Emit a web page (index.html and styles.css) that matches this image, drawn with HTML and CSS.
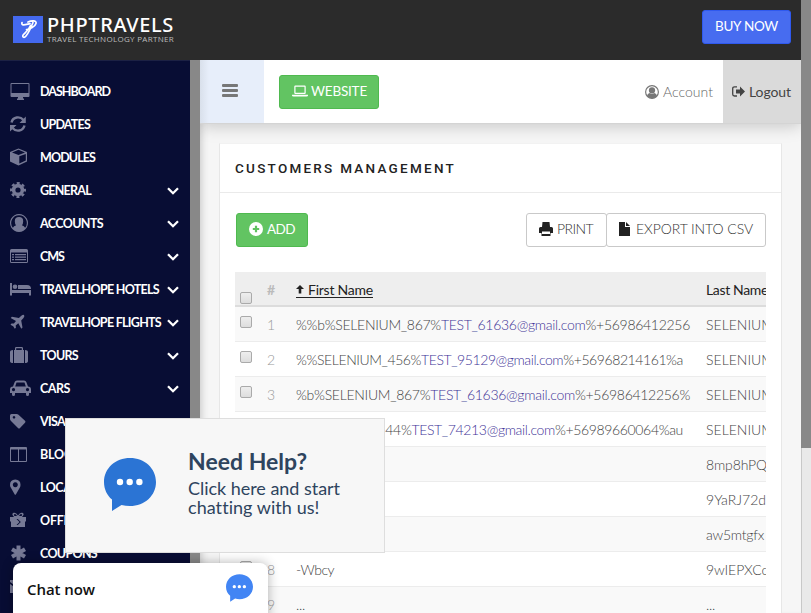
FILE: index.html
```html
<!DOCTYPE html>
<html lang="en">
<head>
<meta charset="utf-8">
<title>Customers Management</title>
<link rel="stylesheet" href="styles.css">
</head>
<body>
<svg class="defs" width="0" height="0">
  <symbol id="bubble" viewBox="0 0 52 53"><path d="M26 0C40.500 0 52 10.300 52 24S40.500 48 26 48q-4.500 0-8.500-1.100L8 53V41.500C3 37.500 0 31 0 24 0 10.300 11.500 0 26 0z"/><g fill="#fff"><circle cx="16" cy="24" r="3.200"/><circle cx="25.700" cy="24" r="3.200"/><circle cx="35.400" cy="24" r="3.200"/></g></symbol>
  <symbol id="chevron" viewBox="0 0 12 8"><path d="M1 1.300 6 6.200 11 1.300" fill="none" stroke="#fff" stroke-width="2.300"/></symbol>
</svg>
<div class="app">
  <div class="page">
    <header class="top">
      <div class="brand">
        <svg class="mark" width="30" height="27" viewBox="0 0 30 27"><path fill="#4469ee" d="M0 0h30v27H0z"/><path fill="none" stroke="#fff" stroke-width="1.700" stroke-linecap="round" stroke-linejoin="round" d="M9 6.500c-1 4 4 2 8 1.200M15 6c4-2 9-1.500 8 1.500-1 3.500-7 6-9.500 6M20 6.500c-2 5-4 10-7 13.500-2 2.500-4.500 1-2.500-1.500 2-2.200 5.500-4.500 7-9"/></svg>
        <div class="brand-text"><div class="name"><span style="width:127px">PHPTRAVELS</span></div><div class="tag"><span style="width:127px">TRAVEL TECHNOLOGY PARTNER</span></div></div>
      </div>
      <a class="buy"><span style="width:63px">BUY NOW</span></a>
    </header>
    <div class="body">
      <nav class="side">
        <ul>
          <li><svg viewBox="0 0 21 20"><path fill-rule="evenodd" d="M1.500 2h17q1 0 1 1v12q0 1-1 1H13v1.500h1V19H7v-1.500h1V16H1.500q-1 0-1-1V3q0-1 1-1zm0 1v9h17V3z"/></svg><span style="width:70px">DASHBOARD</span></li>
          <li><svg viewBox="0 0 21 20"><path fill="none" stroke="currentColor" stroke-width="2.400" d="M1.500 8.500C3 2.500 10 2 13.500 6M14.500 11.500C13 17.500 6 18 2.500 14"/><path d="M15.800 2.500v6.500H9.500zM0 17.500V11h6.500z"/></svg><span style="width:50px">UPDATES</span></li>
          <li><svg viewBox="0 0 21 20"><path fill-rule="evenodd" d="M8.500 1.500 17 5v9.500l-8.500 4L0 14.500V5zm0 1.300L2 5.500l6.500 2.400L15 5.500zm.8 6.500v7.200l6.500-3V7z"/></svg><span style="width:55px">MODULES</span></li>
          <li><svg viewBox="0 0 21 20"><circle cx="8" cy="10" r="4.400" fill="none" stroke="currentColor" stroke-width="3.600"/><circle cx="8" cy="10" r="6.900" fill="none" stroke="currentColor" stroke-width="2.200" stroke-dasharray="3 2.420" stroke-dashoffset="1.500"/></svg><span style="width:51px">GENERAL</span><svg class="chev"><use href="#chevron"/></svg></li>
          <li><svg viewBox="0 0 21 20"><path fill-rule="evenodd" d="M9 1a9 9 0 1 0 .01 0zm0 1.200a7.800 7.800 0 0 1 6.100 12.600q-.8-1.800-3.200-2.600 1.300-1.500 1.300-4Q13.200 4 9 4T4.800 8.200q0 2.500 1.300 4-2.400.8-3.200 2.600A7.800 7.800 0 0 1 9 2.200z"/></svg><span style="width:63px">ACCOUNTS</span><svg class="chev"><use href="#chevron"/></svg></li>
          <li><svg viewBox="0 0 21 20"><path fill-rule="evenodd" d="M1.500 3h15q1.500 0 1.500 1.500v11q0 1.500-1.500 1.500h-15Q0 17 0 15.500v-11Q0 3 1.500 3zM1 6.500V16h16V6.500z"/><path d="M2 8h2v1.300H2zm3 0h11v1.300H5zM2 10.500h2v1.300H2zm3 0h11v1.300H5zM2 13h2v1.300H2zm3 0h11v1.300H5z"/></svg><span style="width:24px">CMS</span><svg class="chev"><use href="#chevron"/></svg></li>
          <li><svg viewBox="0 0 21 20"><path d="M0 4h2v7h19v5.500h-2V14H2v2.500H0z"/><circle cx="5" cy="7.800" r="2.300"/><path d="M8 6h9q4 0 4 4H8z"/></svg><span style="width:119px">TRAVELHOPE HOTELS</span><svg class="chev"><use href="#chevron"/></svg></li>
          <li><svg viewBox="0 0 21 20"><path d="M14 3q1 1-.500 3l-2.300 2.500 1.300 7-1.200 1.200-3-5.500-2.600 2.300.2 2.300-1.100 1-1.600-2.600L.5 12.700l1-1.200 2.400.1L6 9 .7 6l1.200-1.200 7 1.200 2.400-2.300Q13 2.500 14 3z"/></svg><span style="width:121px">TRAVELHOPE FLIGHTS</span><svg class="chev"><use href="#chevron"/></svg></li>
          <li><svg viewBox="0 0 21 20"><path fill-rule="evenodd" d="M5 5V3.200Q5 2 6.200 2h5.600Q13 2 13 3.200V5h1v13H4V5zm1.200-1.700V5h5.600V3.300zM0 7q0-2 3-2v13q-3 0-3-2zm15-2q3 0 3 2v9q0 2-3 2z"/></svg><span style="width:38px">TOURS</span><svg class="chev"><use href="#chevron"/></svg></li>
          <li><svg viewBox="0 0 21 20"><path fill-rule="evenodd" d="M3 8.500 4.700 4Q5.200 2.500 7 2.500h7q1.800 0 2.300 1.500L18 8.500q3 .2 3 3V15h-2v1.500q0 1.500-1.500 1.500T16 16.500V15H5v1.500Q5 18 3.500 18T2 16.500V15H0v-3.500q0-2.800 3-3zm2.200 0h10.600l-1.300-4h-8zM3.500 10a1.600 1.600 0 1 0 .01 0zm14 0a1.600 1.600 0 1 0 .01 0z"/></svg><span style="width:30px">CARS</span><svg class="chev"><use href="#chevron"/></svg></li>
          <li><svg viewBox="0 0 21 20"><path fill-rule="evenodd" d="M1.500 3h5q1.200 0 2 .8l6.500 6q1 1 0 2L10 17q-1 1-2 0L1 10q-1-.8-1-2V4.500Q0 3 1.500 3zM4 5a1.300 1.300 0 1 0 .01 0z"/></svg><span style="width:25px">VISA</span></li>
          <li><svg viewBox="0 0 21 20"><path fill-rule="evenodd" d="M1 3h15q1 0 1 1v13q0 1-1 1H1q-1 0-1-1V4q0-1 1-1zm0 2.500V17h7V5.500zm8 0V17h7V5.500z"/></svg><span style="width:33px">BLOG</span></li>
          <li><svg viewBox="0 0 21 20"><path fill-rule="evenodd" d="M5.300 2.500q5.200.3 5.200 5.300 0 1.500-.5 2.500l-4 7q-.7 1-1.400 0l-4-7Q0 9.300 0 7.800 0 2.800 5.300 2.500zm0 2.800a2.500 2.500 0 1 0 .01 0z"/></svg><span style="width:66px">LOCATIONS</span></li>
          <li><svg viewBox="0 0 21 20"><path fill-rule="evenodd" d="M0 7h4Q1 4 3.500 2.800 6 2 8 5.500 10 2 12.500 2.800 15 4 12 7h4v4.500h-1V17H1v-5.500H0zm5-3q-2 .3-.5 2H7Q6 4 5 4zm6 0q-1 0-2 2h2.500q1.500-1.700-.5-2zM6.500 9l3 3-3 3h1.300l3-3-3-3z"/></svg><span style="width:45px">OFFERS</span></li>
          <li><svg viewBox="0 0 21 20"><path fill="none" stroke="currentColor" stroke-width="4" d="M8.500 2.500v15M2 6.200l13 7.600M15 6.200 2 13.800"/></svg><span style="width:57px">COUPONS</span></li>
          <li><svg viewBox="0 0 21 20"><path d="M0 4h17v2l-8.500 6L0 6zm0 4 8.500 6L17 8v9H0z"/></svg></li>
        </ul>
      </nav>
      <div class="side-scroll"></div>
      <main>
        <div class="bar">
          <a class="burger"><i></i><i></i><i></i></a>
          <a class="btn green site"><svg width="16" height="12" viewBox="0 0 16 12"><path fill="#fff" fill-rule="evenodd" d="M3.300.5h9.400q1 0 1 1V8q0 1-1 1H3.300q-1 0-1-1V1.500q0-1 1-1zM3.500 1.800v6h9v-6zM0 9.800h16v.8q0 .9-1.500.9h-13Q0 11.500 0 10.600z"/></svg><span style="width:56px">WEBSITE</span></a>
          <div class="account"><svg width="14" height="14" viewBox="0 0 18 18"><circle cx="9" cy="9" r="8.200" fill="none" stroke="#777" stroke-width="1.500"/><circle cx="9" cy="7" r="4" fill="#777"/><path fill="#777" d="M2.500 14.500q.5-3.500 3.500-4.200 3 2.500 6 0 3 .7 3.500 4.200-6 5.500-13 0z"/></svg><span style="width:50px">Account</span></div>
          <div class="logout"><svg width="13" height="11" viewBox="0 0 13 11"><path d="M5 .8H2.500q-1.800 0-1.800 1.700v5.800q0 1.700 1.800 1.700H5" fill="none" stroke="#444" stroke-width="1.300"/><path fill="#444" d="M4 3.500h4V.5l5 5-5 5v-3H4z"/></svg><span style="width:42px">Logout</span></div>
        </div>
        <section class="card">
          <h1><span style="width:221px">CUSTOMERS MANAGEMENT</span></h1>
          <div class="tools">
            <a class="btn green add"><svg width="14" height="14" viewBox="0 0 14 14"><circle cx="7" cy="7" r="7" fill="#fff"/><path d="M7 3.800v6.400M3.800 7h6.400" stroke="#5fc25f" stroke-width="2.200"/></svg><span style="width:28px">ADD</span></a>
            <div class="exports">
              <a class="btn plain print"><svg width="14" height="14" viewBox="0 0 14 14"><path fill="#222" fill-rule="evenodd" d="M3.500 0h7l.5 5h1.500Q14 5 14 6.500V11h-2.500v3h-9v-3H0V6.500Q0 5 1.500 5H3zM3 9.500V12h8V9.500z"/></svg><span style="width:36px">PRINT</span></a>
              <a class="btn plain csv"><svg width="11" height="14" viewBox="0 0 11 14"><path fill="#222" d="M0 0h6v5h5v9H0zM7 0l4 4H7z"/></svg><span style="width:117px">EXPORT INTO CSV</span></a>
            </div>
          </div>
          <div class="table">
            <div class="row head"><i class="cb"></i><b class="num">#</b><div class="first"><div class="sort"><svg width="8" height="9" viewBox="0 0 8 9"><path fill="#222" d="M4 0 8 4H5.300v4.500H2.700V4H0z"/></svg><span style="width:65px">First Name</span></div></div><div class="last"><span style="width:62px">Last Name</span></div></div>
            <div class="row"><i class="cb"></i><b class="num">1</b><div class="first"><span style="width:394px">%%b%SELENIUM_867%<a>TEST_61636@gmail.com</a>%+56986412256</span></div><div class="last"><span style="width:68px">SELENIUM</span></div></div>
            <div class="row"><i class="cb"></i><b class="num">2</b><div class="first"><span style="width:387px">%%SELENIUM_456%<a>TEST_95129@gmail.com</a>%+56968214161%a</span></div><div class="last"><span style="width:68px">SELENIUM</span></div></div>
            <div class="row"><i class="cb"></i><b class="num">3</b><div class="first"><span style="width:394px">%b%SELENIUM_867%<a>TEST_61636@gmail.com</a>%+56986412256%</span></div><div class="last"><span style="width:68px">SELENIUM</span></div></div>
            <div class="row"><i class="cb"></i><b class="num">4</b><div class="first"><span style="width:387px">%SELENIUM_144%<a>TEST_74213@gmail.com</a>%+56989660064%au</span></div><div class="last"><span style="width:68px">SELENIUM</span></div></div>
            <div class="row"><i class="cb"></i><b class="num"></b><div class="first"></div><div class="last"><span style="width:61px">8mp8hPQ</span></div></div>
            <div class="row"><i class="cb"></i><b class="num"></b><div class="first"></div><div class="last"><span style="width:60px">9YaRJ72d</span></div></div>
            <div class="row"><i class="cb"></i><b class="num"></b><div class="first"></div><div class="last"><span style="width:58px">aw5mtgfx</span></div></div>
            <div class="row"><i class="cb"></i><b class="num">8</b><div class="first"><span style="width:38px">-Wbcy</span></div><div class="last"><span style="width:62px">9wIEPXCc</span></div></div>
            <div class="row"><i class="cb"></i><b class="num">9</b><div class="first"><span style="width:9px">...</span></div><div class="last"><span style="width:9px">...</span></div></div>
          </div>
        </section>
      </main>
    </div>
  </div>
  <div class="scroll"><div class="thumb"></div></div>
  <aside class="help">
    <svg width="52" height="53" fill="#2b74d4"><use href="#bubble"/></svg>
    <div class="help-text"><strong><span style="width:119px">Need Help?</span></strong><p><span style="width:152px">Click here and start</span></p><p><span style="width:131px">chatting with us!</span></p></div>
  </aside>
  <aside class="chat"><span style="width:68px">Chat now</span><svg width="27" height="28" fill="#4285f4"><use href="#bubble"/></svg></aside>
</div>
<script src="fit.js"></script>
</body>
</html>
```
FILE: fit.js
```js
document.querySelectorAll('span[style*="width"]').forEach(function (el) {
  var target = parseFloat(el.style.width);
  el.style.width = 'auto';
  el.style.letterSpacing = '0';
  var natural = el.getBoundingClientRect().width;
  el.style.letterSpacing = ((target - natural) / el.textContent.length).toFixed(3) + 'px';
  el.style.width = target + 'px';
});
```
FILE: styles.css
```css
* { box-sizing: border-box; }
body { margin: 0; font: 300 14px/20px Lato, "Liberation Sans", sans-serif; color: #444; }
.defs { display: none; }
span { display: inline-block; white-space: nowrap; }
.app { position: relative; display: flex; width: 811px; height: 613px; overflow: hidden; }
.page { width: 801px; display: flex; flex-direction: column; }
.scroll { width: 10px; background: #e9e9e9; border-left: 1px solid #c8c8c8; }
.thumb { height: 448px; margin-left: -1px; background: #888; }
.top { height: 60px; flex: none; background: #2b2b2b; display: flex; justify-content: space-between; padding: 10px 10px 0 13px; }
.brand { display: flex; gap: 4px; padding-top: 6px; }
.name { font: 500 20px/17px "Noto Sans", sans-serif; color: #fff; height: 18px; white-space: nowrap; }
.tag { font: 8px/10px "Open Sans", sans-serif; color: #bbb; white-space: nowrap; }
.brand-text { width: 129px; }
.buy { width: 89px; height: 34px; border: 1px solid #2f59ee; border-radius: 3px; background: #476cf0; color: #fff; text-align: center; line-height: 31px; font-weight: 400; font-size: 13.500px; }
.body { display: flex; flex: 1; min-height: 0; }
.side { width: 190px; background: #080d34; border-top: 1px solid #1c2144; overflow: hidden; flex: none; }
.side ul { list-style: none; margin: 0; padding: 13px 11px 0 10px; }
.side li { height: 33px; display: flex; align-items: center; color: #fff; font-size: 12.500px; font-weight: 700; }
.side li > span { margin-top: 2px; }
.side li > svg { width: 21px; height: 20px; margin-right: 9px; fill: currentColor; color: #767995; flex: none; }
.side li > svg.chev { width: 12px; height: 8px; margin: 3px 0 0 auto; }
.side-scroll { width: 10px; background: #888; flex: none; }
main { flex: 1; min-width: 0; background: #f6f6f6; box-shadow: inset 7px 0 7px -5px #ccc; overflow: hidden; }
.bar { height: 64px; background: #fff; display: flex; align-items: center; border-bottom: 1px solid #d4d4d4; box-shadow: 0 2px 16px rgba(0,0,0,.2); }
.burger { width: 64px; height: 63px; background: linear-gradient(90deg, #d9e0eb, #e7eefa 9px); padding: 24px 0 0 22px; }
.burger i { display: block; width: 16px; height: 3px; margin-bottom: 2px; border-radius: 1px; background: #777; }
.btn { display: flex; height: 34px; align-items: center; border: 1px solid; border-radius: 3px; padding-bottom: 2px; }
.green { background: #62c462; border-color: #4fb94f; color: #fff; font-weight: 400; font-size: 13.500px; }
.site { width: 100px; margin-left: 15px; padding-left: 12px; gap: 3px; padding-bottom: 1px; }
.account { margin-left: auto; width: 78px; display: flex; align-items: center; gap: 4px; color: #666; }
.logout { width: 78px; height: 63px; background: #dadada; display: flex; align-items: center; gap: 4px; padding-left: 9px; font-weight: 400; }
.card { width: 563px; height: 500px; margin: 19px 0 0 19px; background: #fff; border: 1px solid #e7e7e7; border-top-color: #f2f2f2; }
h1 { height: 49px; margin: 0; padding: 0 15px; border-bottom: 1px solid #eaeaea; font: 500 13.500px/48px Roboto, sans-serif; color: #222; }
.tools { display: flex; justify-content: space-between; padding: 20px 15px 0 16px; height: 79px; }
.add { width: 72px; padding-left: 12px; gap: 4px; }
.exports { display: flex; }
.plain { border-color: #c9c9c9; color: #333; }
.print { width: 81px; padding-left: 12px; gap: 4px; }
.csv { width: 160px; padding-left: 12px; gap: 6px; margin-left: -1px; }
.table { width: 531px; margin-left: 15px; overflow: hidden; }
.row { display: flex; width: 620px; height: 35px; border-bottom: 1px solid #ececec; padding-left: 5px; line-height: 36px; }
.row:nth-child(even) { background: #f9f9f9; }
.row.head { background: #eee; border-bottom: 2px solid #dcdcdc; color: #222; font-weight: 400; }
.cb { width: 12px; height: 12px; margin-top: 9px; border: 1px solid #aaa; border-radius: 2px; background: linear-gradient(#eee, #ddd); flex: none; }
.head .cb { margin-top: 20px; }
.num { width: 28px; margin-left: 15px; margin-right: 1px; font-weight: 300; color: #999; }
.head .num { font-weight: 700; color: #bbb; }
.first { width: 410px; }
.sort { display: flex; align-items: center; gap: 4px; width: 77px; height: 17px; margin-top: 9px; border-bottom: 1px solid #222; line-height: 17px; }
.first a { color: #403397; }
.help { position: absolute; left: 65px; top: 418px; width: 320px; height: 135px; background: #f7f7f7; border: 1px solid #dedede; display: flex; padding: 39px 0 0 38px; color: #2e445e; }
.help-text { margin-left: 32px; margin-top: -11px; font-weight: 400; }
.help strong { display: block; font: 700 23px/28px Lato, sans-serif; }
.help p { margin: 0; font: 400 18px/19px Lato, sans-serif; height: 19px; }
.help strong + p { margin-top: 4px; }
.chat { position: absolute; left: 13px; top: 563px; width: 255px; height: 60px; border-radius: 8px; background: #fff; box-shadow: 0 0 12px rgba(0,0,0,.3); display: flex; justify-content: space-between; padding: 11px 15px 0 14px; font: 600 15px/30px "Open Sans", sans-serif; color: #111; }
```
